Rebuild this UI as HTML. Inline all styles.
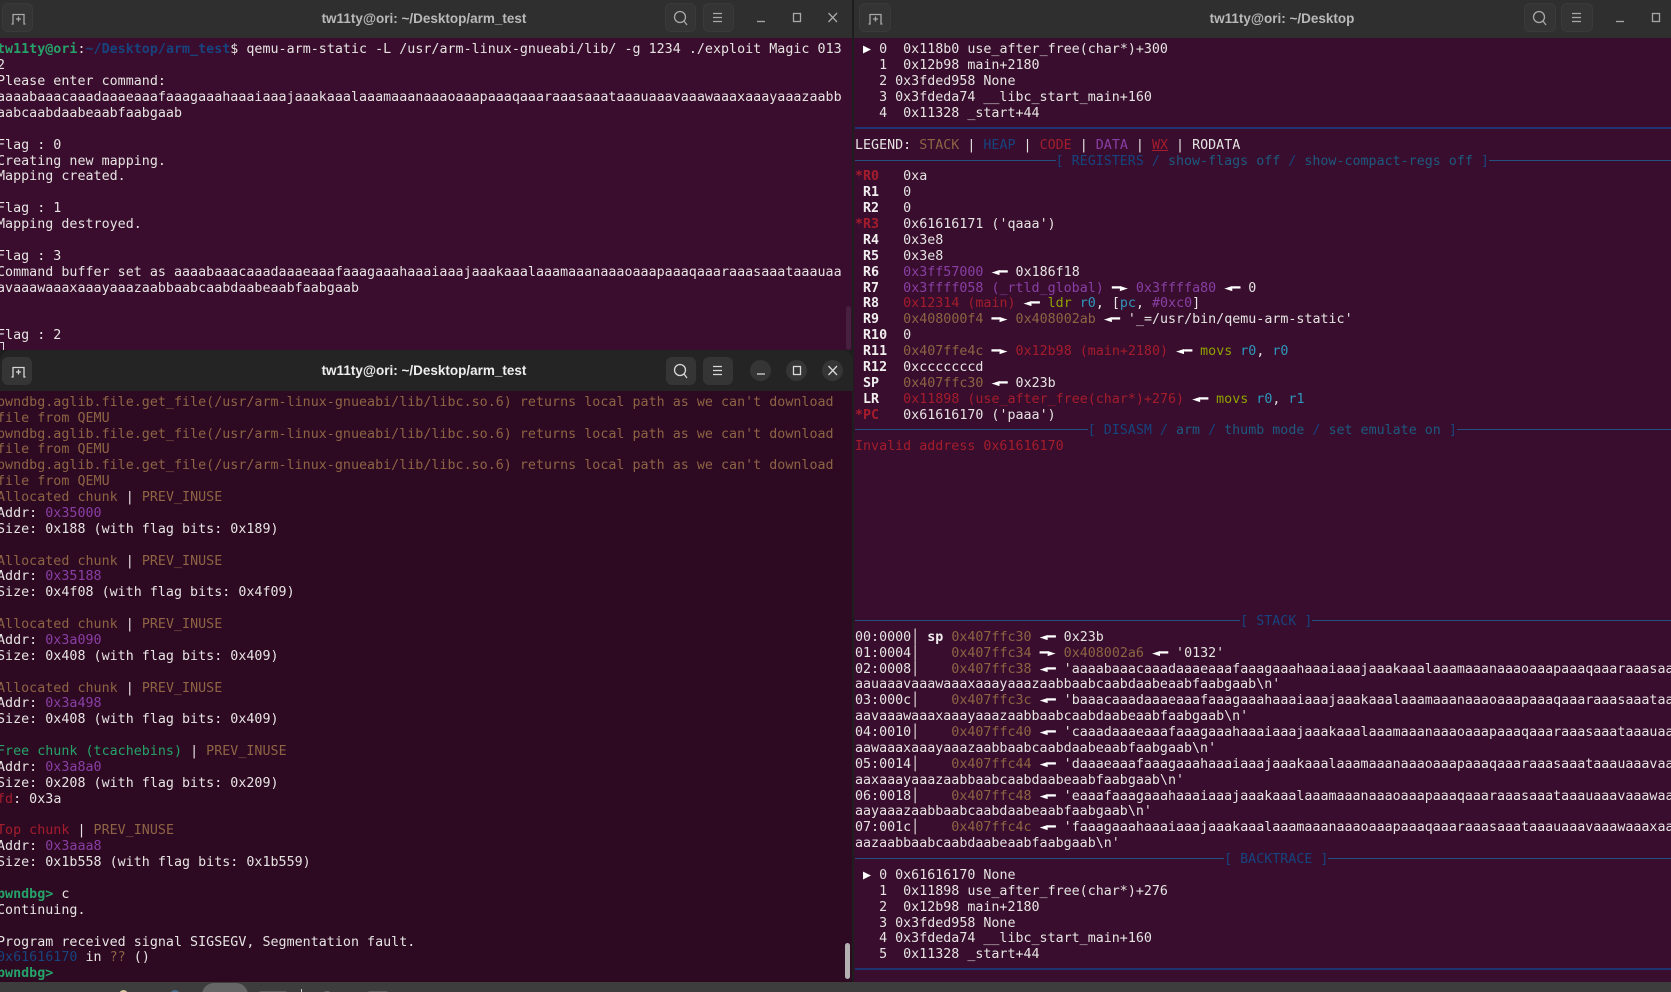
<!DOCTYPE html>
<html><head><meta charset="utf-8"><style>
html,body{margin:0;padding:0;background:#1e1e1e;width:1671px;height:992px;overflow:hidden}
.a{position:absolute;overflow:hidden}
pre{position:absolute;margin:0;font:13.33px/15.87px "DejaVu Sans Mono",monospace;color:#e6e4e2;white-space:pre;filter:blur(.25px)}
.lp{letter-spacing:.02px}
.t{position:absolute;top:1px;text-align:center;font:bold 13.5px/36px "Liberation Sans",sans-serif;white-space:nowrap}
.btn{position:absolute;border-radius:6px}
svg{position:absolute;left:0;top:0}
b{font-weight:bold;color:#f0eeee}
.y{color:#8e6444}.u{color:#17447f}.r{color:#a51d2d}.p{color:#8a3fa5}.g{color:#26a269}.c{color:#2f97bd}.o{color:#8fa300}.w{color:#fff;font-weight:normal}.n{color:#1e5a80}
b.g{color:#26a269}b.u{color:#17447f}
i.l{display:inline-block;height:1px;background:#24507f;vertical-align:4px}
i.k{display:inline-block;height:2px;background:#1f3370;vertical-align:4px}
</style></head><body>

<!-- top-left window -->
<div class="a" style="left:0;top:38px;width:852px;height:312px;background:#3a0c2d">
<pre class="lp" style="left:-3px;top:4.400px"><b class="g">tw11ty@ori</b>:<b class="u">~/Desktop/arm_test</b>$ qemu-arm-static -L /usr/arm-linux-gnueabi/lib/ -g 1234 ./exploit Magic 013
2
Please enter command:
aaaabaaacaaadaaaeaaafaaagaaahaaaiaaajaaakaaalaaamaaanaaaoaaapaaaqaaaraaasaaataaauaaavaaawaaaxaaayaaazaabb
aabcaabdaabeaabfaabgaab

Flag : 0
Creating new mapping.
Mapping created.

Flag : 1
Mapping destroyed.

Flag : 3
Command buffer set as aaaabaaacaaadaaaeaaafaaagaaahaaaiaaajaaakaaalaaamaaanaaaoaaapaaaqaaaraaasaaataaauaa
avaaawaaaxaaayaaazaabbaabcaabdaabeaabfaabgaab


Flag : 2</pre>
<div style="position:absolute;left:-1px;top:304px;width:3px;height:10px;border:1px solid #ddd"></div>
<div style="position:absolute;left:846px;top:268px;width:5px;height:44px;border-radius:3px;background:#472040"></div>
</div>
<div class="a" style="left:0;top:0;width:852px;height:38px;background:#2f2f2f">
<div class="btn" style="left:2px;top:3px;width:31px;height:29px;background:#343434;border:1px solid #3a3a3a;box-sizing:border-box"></div>
<div class="btn" style="left:665px;top:3px;width:31px;height:29px;background:#343434;border:1px solid #3a3a3a;box-sizing:border-box"></div>
<div class="btn" style="left:703px;top:3px;width:31px;height:29px;background:#343434;border:1px solid #3a3a3a;box-sizing:border-box"></div>
<div class="t" style="left:221px;width:406px;color:#b9b9b9">tw11ty@ori: ~/Desktop/arm_test</div>
<svg width="852" height="38" fill="none" stroke="#a8a8a8" stroke-width="1.3">
<path d="M11.500 24H13V14.500H24V24h1.500M18.500 16.500v5M16 19h5"/>
<circle cx="680" cy="17" r="5.500"/><path d="M684 21l3 4"/>
<path d="M713 13.500h9M713 17.500h9M713 21.500h9"/>
<path d="M757 21.500h8"/><rect x="793.500" y="13.500" width="7" height="8"/>
<path d="M828.500 13l8.500 9M837 13l-8.500 9"/>
</svg>
</div>

<!-- bottom-left window -->
<div class="a" style="left:0;top:391px;width:852px;height:591px;background:#2d0922">
<pre class="lp" style="left:-3px;top:3.800px"><span class="y">pwndbg.aglib.file.get_file(/usr/arm-linux-gnueabi/lib/libc.so.6) returns local path as we can't download
file from QEMU
pwndbg.aglib.file.get_file(/usr/arm-linux-gnueabi/lib/libc.so.6) returns local path as we can't download
file from QEMU
pwndbg.aglib.file.get_file(/usr/arm-linux-gnueabi/lib/libc.so.6) returns local path as we can't download
file from QEMU
Allocated chunk</span> | <span class="y">PREV_INUSE</span>
Addr: <span class="p">0x35000</span>
Size: 0x188 (with flag bits: 0x189)

<span class="y">Allocated chunk</span> | <span class="y">PREV_INUSE</span>
Addr: <span class="p">0x35188</span>
Size: 0x4f08 (with flag bits: 0x4f09)

<span class="y">Allocated chunk</span> | <span class="y">PREV_INUSE</span>
Addr: <span class="p">0x3a090</span>
Size: 0x408 (with flag bits: 0x409)

<span class="y">Allocated chunk</span> | <span class="y">PREV_INUSE</span>
Addr: <span class="p">0x3a498</span>
Size: 0x408 (with flag bits: 0x409)

<span class="g">Free chunk (tcachebins)</span> | <span class="y">PREV_INUSE</span>
Addr: <span class="p">0x3a8a0</span>
Size: 0x208 (with flag bits: 0x209)
<span class="r">fd</span>: 0x3a

<span class="r">Top chunk</span> | <span class="y">PREV_INUSE</span>
Addr: <span class="p">0x3aaa8</span>
Size: 0x1b558 (with flag bits: 0x1b559)

<b class="g">pwndbg&gt;</b> c
Continuing.

Program received signal SIGSEGV, Segmentation fault.
<span class="u">0x61616170</span> in <span class="y">??</span> ()
<b class="g">pwndbg&gt;</b></pre>
<div style="position:absolute;left:845px;top:552px;width:5px;height:36px;border-radius:3px;background:#b4b0b2"></div>
</div>
<div class="a" style="left:0;top:350px;width:853px;height:41px;background:#242424;border-radius:11px 11px 0 0">
<div class="btn" style="left:2px;top:7px;width:30px;height:28px;background:#353535"></div>
<div class="btn" style="left:666px;top:7px;width:30px;height:28px;background:#353535"></div>
<div class="btn" style="left:703px;top:7px;width:30px;height:28px;background:#353535"></div>
<div class="btn" style="left:750px;top:10px;width:21px;height:21px;border-radius:50%;background:#353535"></div>
<div class="btn" style="left:786px;top:10px;width:21px;height:21px;border-radius:50%;background:#353535"></div>
<div class="btn" style="left:822px;top:10px;width:21px;height:21px;border-radius:50%;background:#353535"></div>
<div class="t" style="left:221px;width:406px;color:#eeeeee;line-height:36px;top:3px">tw11ty@ori: ~/Desktop/arm_test</div>
<svg width="853" height="41" fill="none" stroke="#d8d8d8" stroke-width="1.3">
<path d="M11.500 27H13V17.500H24V27h1.500M18.500 19.500v5M16 22h5"/>
<circle cx="680" cy="20" r="5.500"/><path d="M684 24l3 4"/>
<path d="M713 16.500h9M713 20.500h9M713 24.500h9"/>
<path d="M757 24h8"/><rect x="793.500" y="16.500" width="7" height="8"/>
<path d="M828.500 16l8.500 9M837 16l-8.500 9"/>
</svg>
</div>

<!-- right window -->
<div class="a" style="left:854px;top:38px;width:817px;height:944px;background:#380d2d">
<pre style="left:1px;top:4.400px"> <span class="w">▶</span> 0  0x118b0 use_after_free(char*)+300
   1  0x12b98 main+2180
   2 0x3fded958 None
   3 0x3fdeda74 __libc_start_main+160
   4  0x11328 _start+44
<i class="k" style="width:120ch"></i>
LEGEND: <span class="y">STACK</span> | <span class="u">HEAP</span> | <span class="r">CODE</span> | <span class="p">DATA</span> | <span class="r" style="text-decoration:underline">WX</span> | RODATA
<i class="l" style="width:25ch"></i><span class="u">[ REGISTERS / </span><span class="n">show-flags off</span><span class="u"> / </span><span class="n">show-compact-regs off</span><span class="u"> ]</span><i class="l" style="width:60ch"></i>
<b class="r">*R0 </b>  0xa
<b> R1 </b>  0
<b> R2 </b>  0
<b class="r">*R3 </b>  0x61616171 ('qaaa')
<b> R4 </b>  0x3e8
<b> R5 </b>  0x3e8
<b> R6 </b>  <span class="p">0x3ff57000</span> <b class="w">◄━</b> 0x186f18
<b> R7 </b>  <span class="p">0x3ffff058 (_rtld_global)</span> <b class="w">━►</b> <span class="p">0x3ffffa80</span> <b class="w">◄━</b> 0
<b> R8 </b>  <span class="r">0x12314 (main)</span> <b class="w">◄━</b> <span class="o">ldr</span> <span class="c">r0</span>, [<span class="c">pc</span>, <span class="p">#0xc0</span>]
<b> R9 </b>  <span class="y">0x408000f4</span> <b class="w">━►</b> <span class="y">0x408002ab</span> <b class="w">◄━</b> '_=/usr/bin/qemu-arm-static'
<b> R10</b>  0
<b> R11</b>  <span class="y">0x407ffe4c</span> <b class="w">━►</b> <span class="r">0x12b98 (main+2180)</span> <b class="w">◄━</b> <span class="o">movs</span> <span class="c">r0</span>, <span class="c">r0</span>
<b> R12</b>  0xcccccccd
<b> SP </b>  <span class="y">0x407ffc30</span> <b class="w">◄━</b> 0x23b
<b> LR </b>  <span class="r">0x11898 (use_after_free(char*)+276)</span> <b class="w">◄━</b> <span class="o">movs</span> <span class="c">r0</span>, <span class="c">r1</span>
<b class="r">*PC </b>  0x61616170 ('paaa')
<i class="l" style="width:29ch"></i><span class="u">[ DISASM / </span><span class="n">arm</span><span class="u"> / </span><span class="n">thumb mode</span><span class="u"> / </span><span class="n">set emulate on</span><span class="u"> ]</span><i class="l" style="width:60ch"></i>
<span class="r">Invalid address 0x61616170</span>










<i class="l" style="width:48ch"></i><span class="u">[ STACK ]</span><i class="l" style="width:60ch"></i>
00:0000│ <b>sp</b> <span class="y">0x407ffc30</span> <b class="w">◄━</b> 0x23b
01:0004│    <span class="y">0x407ffc34</span> <b class="w">━►</b> <span class="y">0x408002a6</span> <b class="w">◄━</b> '0132'
02:0008│    <span class="y">0x407ffc38</span> <b class="w">◄━</b> 'aaaabaaacaaadaaaeaaafaaagaaahaaaiaaajaaakaaalaaamaaanaaaoaaapaaaqaaaraaasaaata
aauaaavaaawaaaxaaayaaazaabbaabcaabdaabeaabfaabgaab\n'
03:000c│    <span class="y">0x407ffc3c</span> <b class="w">◄━</b> 'baaacaaadaaaeaaafaaagaaahaaaiaaajaaakaaalaaamaaanaaaoaaapaaaqaaaraaasaaataaaua
aavaaawaaaxaaayaaazaabbaabcaabdaabeaabfaabgaab\n'
04:0010│    <span class="y">0x407ffc40</span> <b class="w">◄━</b> 'caaadaaaeaaafaaagaaahaaaiaaajaaakaaalaaamaaanaaaoaaapaaaqaaaraaasaaataaauaaava
aawaaaxaaayaaazaabbaabcaabdaabeaabfaabgaab\n'
05:0014│    <span class="y">0x407ffc44</span> <b class="w">◄━</b> 'daaaeaaafaaagaaahaaaiaaajaaakaaalaaamaaanaaaoaaapaaaqaaaraaasaaataaauaaavaaawa
aaxaaayaaazaabbaabcaabdaabeaabfaabgaab\n'
06:0018│    <span class="y">0x407ffc48</span> <b class="w">◄━</b> 'eaaafaaagaaahaaaiaaajaaakaaalaaamaaanaaaoaaapaaaqaaaraaasaaataaauaaavaaawaaaxa
aayaaazaabbaabcaabdaabeaabfaabgaab\n'
07:001c│    <span class="y">0x407ffc4c</span> <b class="w">◄━</b> 'faaagaaahaaaiaaajaaakaaalaaamaaanaaaoaaapaaaqaaaraaasaaataaauaaavaaawaaaxaaaya
aazaabbaabcaabdaabeaabfaabgaab\n'
<i class="l" style="width:46ch"></i><span class="u">[ BACKTRACE ]</span><i class="l" style="width:60ch"></i>
 <span class="w">▶</span> 0 0x61616170 None
   1  0x11898 use_after_free(char*)+276
   2  0x12b98 main+2180
   3 0x3fded958 None
   4 0x3fdeda74 __libc_start_main+160
   5  0x11328 _start+44
<i class="k" style="width:120ch"></i></pre>
</div>
<div class="a" style="left:854px;top:0;width:817px;height:38px;background:#2f2f2f">
<div class="btn" style="left:5px;top:3px;width:32px;height:29px;background:#343434;border:1px solid #3a3a3a;box-sizing:border-box"></div>
<div class="btn" style="left:670px;top:3px;width:32px;height:29px;background:#343434;border:1px solid #3a3a3a;box-sizing:border-box"></div>
<div class="btn" style="left:707px;top:3px;width:32px;height:29px;background:#343434;border:1px solid #3a3a3a;box-sizing:border-box"></div>
<div class="t" style="left:228px;width:400px;color:#b9b9b9">tw11ty@ori: ~/Desktop</div>
<svg width="817" height="38" fill="none" stroke="#a8a8a8" stroke-width="1.3">
<path d="M14.500 24H16V14.500H27V24h1.500M21.500 16.500v5M19 19h5"/>
<circle cx="685" cy="17" r="5.500"/><path d="M689 21l3 4"/>
<path d="M718 13.500h9M718 17.500h9M718 21.500h9"/>
<path d="M762 21.500h8"/><rect x="798.500" y="13.500" width="7" height="8"/>
</svg>
</div>

<!-- taskbar -->
<div class="a" style="left:0;top:982px;width:1671px;height:10px;background:#3d3d3d">
<div style="position:absolute;left:202px;top:1px;width:46px;height:20px;border-radius:12px 12px 0 0;background:#666"></div>
<div style="position:absolute;left:119px;top:8px;width:9px;height:9px;border-radius:50%;background:#d8c8a0"></div>
<div style="position:absolute;left:170px;top:8px;width:10px;height:9px;border-radius:50%;background:#4a6a8c"></div>
<div style="position:absolute;left:258px;top:9px;width:30px;height:9px;background:#5c5c5c;border-radius:3px"></div>
<div style="position:absolute;left:301px;top:7px;width:1px;height:5px;background:#ccc"></div>
<div style="position:absolute;left:322px;top:9px;width:10px;height:9px;border-radius:50%;background:#6c6c6c"></div>
<div style="position:absolute;left:367px;top:9px;width:22px;height:9px;background:#5c5c5c;border-radius:3px"></div>
</div>
</body></html>
